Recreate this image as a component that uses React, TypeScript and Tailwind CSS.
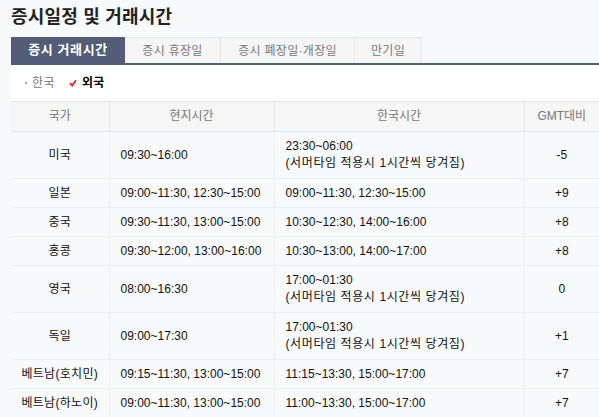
import { Fragment } from "react";

const TABS = ["증시 거래시간", "증시 휴장일", "증시 폐장일·개장일", "만기일"];

type Row = { country: string; local: string; korea: string; note?: boolean; gmt: string };

const ROWS: Row[] = [
  { country: "미국", local: "09:30~16:00", korea: "23:30~06:00", note: true, gmt: "-5" },
  { country: "일본", local: "09:00~11:30, 12:30~15:00", korea: "09:00~11:30, 12:30~15:00", gmt: "+9" },
  { country: "중국", local: "09:30~11:30, 13:00~15:00", korea: "10:30~12:30, 14:00~16:00", gmt: "+8" },
  { country: "홍콩", local: "09:30~12:00, 13:00~16:00", korea: "10:30~13:00, 14:00~17:00", gmt: "+8" },
  { country: "영국", local: "08:00~16:30", korea: "17:00~01:30", note: true, gmt: "0" },
  { country: "독일", local: "09:00~17:30", korea: "17:00~01:30", note: true, gmt: "+1" },
  { country: "베트남(호치민)", local: "09:15~11:30, 13:00~15:00", korea: "11:15~13:30, 15:00~17:00", gmt: "+7" },
  { country: "베트남(하노이)", local: "09:00~11:30, 13:00~15:00", korea: "11:00~13:30, 15:00~17:00", gmt: "+7" },
];

export default function App() {
  return (
    <div
      className="min-h-[417px] w-full overflow-hidden bg-[#f8f9fb] pl-[11px] text-[#111]"
      style={{ fontFamily: '"Liberation Sans", "Noto Sans CJK KR", sans-serif' }}
    >
      {/* 제목 */}
      <h1 className="pt-[4px] text-[18px] font-bold leading-[26px] tracking-[0.2px] text-[#222]">
        증시일정 및 거래시간
      </h1>

      {/* 탭 */}
      <div className="mt-[7px] flex h-[28px] border-b-[2px] border-[#535d78]">
        {TABS.map((t, i) =>
          i === 0 ? (
            <div
              key={t}
              className="flex w-[114px] items-center justify-center bg-[#535d78] text-[13px] font-bold tracking-[0.6px] text-white"
            >
              {t}
            </div>
          ) : (
            <div
              key={t}
              className={
                "flex items-center justify-center border-r border-t border-[#e6e6e6] bg-[#f5f5f5] text-[12px] tracking-[0.3px] text-[#777] " +
                (i === 1 ? "w-[96px]" : i === 2 ? "w-[134px]" : "w-[67px]")
              }
            >
              {t}
            </div>
          )
        )}
      </div>

      {/* 국내/외국 */}
      <div className="flex h-[36px] items-center bg-white pl-[14px] text-[12px] tracking-[0.4px]">
        <span className="mr-[5px] h-[2px] w-[2px] bg-[#aaa]" />
        <span className="text-[#777]">한국</span>
        <svg className="ml-[14px] mr-[5px]" width="8" height="8" viewBox="0 0 8 8">
          <path d="M1 4.2 L3.2 6.6 L7 1.2" fill="none" stroke="#e0242b" strokeWidth="1.8" />
        </svg>
        <span className="font-bold text-black">외국</span>
      </div>

      {/* 거래시간 표 */}
      <table className="w-full table-fixed border-collapse text-[12px] leading-[17px]">
        <colgroup>
          <col className="w-[98px]" />
          <col className="w-[165px]" />
          <col className="w-[250px]" />
          <col />
        </colgroup>
        <thead>
          <tr className="h-[30px] border-y border-[#e6e6e6] bg-[#f6f6f6] text-[#777]">
            <th className="border-r border-[#e6e6e6] font-normal">국가</th>
            <th className="border-r border-[#e6e6e6] font-normal">현지시간</th>
            <th className="border-r border-[#e6e6e6] font-normal">한국시간</th>
            <th className="font-normal">GMT대비</th>
          </tr>
        </thead>
        <tbody>
          {ROWS.map((r) => (
            <tr key={r.country} className={(r.note ? "h-[47px]" : "h-[29px]") + " border-b border-[#eceef2]"}>
              <td className="border-r border-[#eceef2] text-center tracking-[0.3px]">{r.country}</td>
              <td className="border-r border-[#eceef2] pl-[11px]">{r.local}</td>
              <td className="border-r border-[#eceef2] pl-[11px]">
                {r.note ? (
                  <Fragment>
                    {r.korea}
                    <br />
                    <span className="tracking-[0.6px]">(서머타임 적용시 1시간씩 당겨짐)</span>
                  </Fragment>
                ) : (
                  r.korea
                )}
              </td>
              <td className="text-center">{r.gmt}</td>
            </tr>
          ))}
        </tbody>
      </table>
    </div>
  );
}
